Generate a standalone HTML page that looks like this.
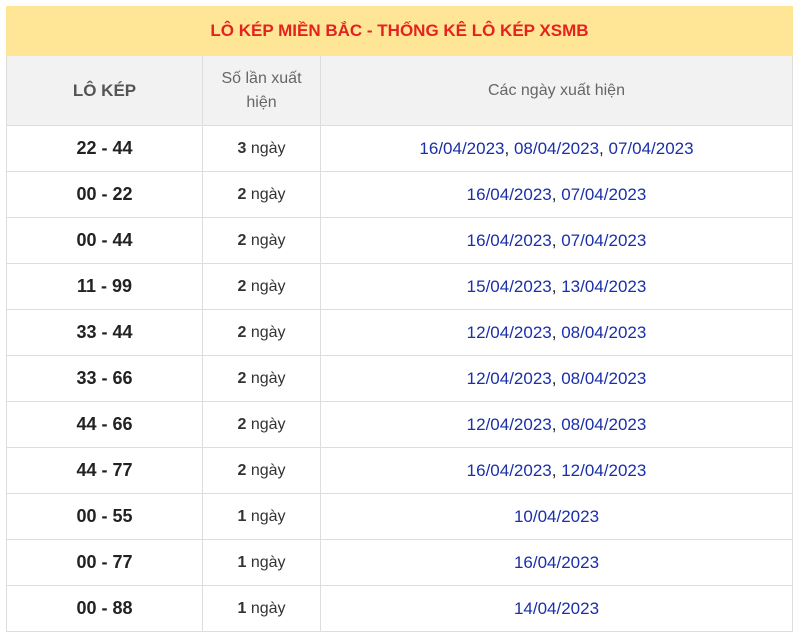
<!DOCTYPE html>
<html><head><meta charset="utf-8"><style>
body{margin:0;background:#fff;font-family:"Liberation Sans",Arial,sans-serif;}
table{position:absolute;left:6px;top:6px;width:787px;border-collapse:collapse;table-layout:fixed;}
td,th{border:1px solid #ddd;text-align:center;padding:0;}
.t{background:#ffe596;color:#e4231f;font-weight:bold;font-size:17px;height:48px;border-color:#ffe596;}
.h th{background:#f2f2f2;color:#666;font-weight:normal;font-size:16px;height:69px;line-height:24px;}
.h th.a{font-weight:bold;font-size:17px;color:#555;}
tr.r td{height:45px;font-size:16px;color:#333;}
tr.r td.k{font-weight:bold;font-size:18px;color:#222;}
tr.r td.d{color:#1a2fa8;font-size:17px;}
tr.r td.d b{color:#222;font-weight:normal;}
</style></head><body>
<table>
<colgroup><col style="width:196px"><col style="width:118px"><col></colgroup>
<tr><td class="t" colspan="3">LÔ KÉP MIỀN BẮC - THỐNG KÊ LÔ KÉP XSMB</td></tr>
<tr class="h"><th class="a">LÔ KÉP</th><th>Số lần xuất<br>hiện</th><th>Các ngày xuất hiện</th></tr>
<tr class="r"><td class="k">22 - 44</td><td><b>3</b> ngày</td><td class="d">16/04/2023<b>,</b> 08/04/2023<b>,</b> 07/04/2023</td></tr>
<tr class="r"><td class="k">00 - 22</td><td><b>2</b> ngày</td><td class="d">16/04/2023<b>,</b> 07/04/2023</td></tr>
<tr class="r"><td class="k">00 - 44</td><td><b>2</b> ngày</td><td class="d">16/04/2023<b>,</b> 07/04/2023</td></tr>
<tr class="r"><td class="k">11 - 99</td><td><b>2</b> ngày</td><td class="d">15/04/2023<b>,</b> 13/04/2023</td></tr>
<tr class="r"><td class="k">33 - 44</td><td><b>2</b> ngày</td><td class="d">12/04/2023<b>,</b> 08/04/2023</td></tr>
<tr class="r"><td class="k">33 - 66</td><td><b>2</b> ngày</td><td class="d">12/04/2023<b>,</b> 08/04/2023</td></tr>
<tr class="r"><td class="k">44 - 66</td><td><b>2</b> ngày</td><td class="d">12/04/2023<b>,</b> 08/04/2023</td></tr>
<tr class="r"><td class="k">44 - 77</td><td><b>2</b> ngày</td><td class="d">16/04/2023<b>,</b> 12/04/2023</td></tr>
<tr class="r"><td class="k">00 - 55</td><td><b>1</b> ngày</td><td class="d">10/04/2023</td></tr>
<tr class="r"><td class="k">00 - 77</td><td><b>1</b> ngày</td><td class="d">16/04/2023</td></tr>
<tr class="r"><td class="k">00 - 88</td><td><b>1</b> ngày</td><td class="d">14/04/2023</td></tr>
</table>
</body></html>
